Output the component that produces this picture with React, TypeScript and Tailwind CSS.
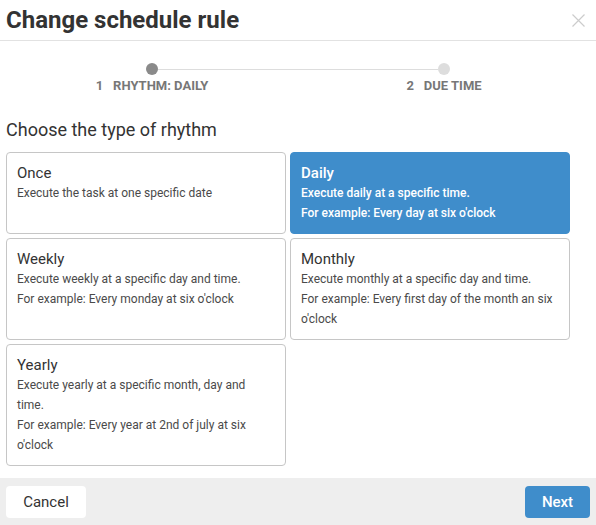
import React from "react";

const font = { fontFamily: "Roboto, 'Noto Sans', Arial, sans-serif" };

type Opt = { title: string; lines: string[]; selected?: boolean };

const options: Opt[] = [
  { title: "Once", lines: ["Execute the task at one specific date"] },
  {
    title: "Daily",
    lines: ["Execute daily at a specific time.", "For example: Every day at six o'clock"],
    selected: true,
  },
  {
    title: "Weekly",
    lines: ["Execute weekly at a specific day and time.", "For example: Every monday at six o'clock"],
  },
  {
    title: "Monthly",
    lines: ["Execute monthly at a specific day and time.", "For example: Every first day of the month an six o'clock"],
  },
  {
    title: "Yearly",
    lines: ["Execute yearly at a specific month, day and time.", "For example: Every year at 2nd of july at six o'clock"],
  },
];

function Card({ o }: { o: Opt }) {
  if (o.selected) {
    return (
      <div className="rounded-[4px] border border-[#3f8dcb] bg-[#3f8dcb] p-[10px] text-white">
        <div className="text-[15px] leading-[20px] font-medium">{o.title}</div>
        {o.lines.map((l, i) => (
          <div key={i} className="text-[12px] leading-[20px] font-medium">
            {l}
          </div>
        ))}
      </div>
    );
  }
  return (
    <div className="rounded-[4px] border border-[#c6c6c6] bg-white p-[10px]">
      <div className="text-[15px] leading-[20px] text-[#333333]">{o.title}</div>
      {o.lines.map((l, i) => (
        <div key={i} className="text-[12px] leading-[20px] text-[#4a4a4a]">
          {l}
        </div>
      ))}
    </div>
  );
}

export default function App() {
  return (
    <div className="flex h-[525px] w-[596px] flex-col bg-white" style={font}>
      <div className="flex h-[41px] items-center justify-between border-b border-[#e2e2e2] pl-[6px] pr-[11px]">
        <div className="text-[24px] font-bold leading-[28px] text-[#333333]">Change schedule rule</div>
        <svg width="13" height="13" viewBox="0 0 13 13">
          <path d="M0.5 0.5 L12.5 12.5 M12.5 0.5 L0.5 12.5" stroke="#cccccc" strokeWidth="1.2" />
        </svg>
      </div>

      <div className="mt-[22px] grid grid-cols-2 px-[6px]">
        <div className="flex flex-col items-center">
          <div className="flex w-full items-center">
            <div className="h-px flex-1" />
            <div className="h-[12px] w-[12px] rounded-full bg-[#8a8a8a]" />
            <div className="h-px flex-1 bg-[#dddddd]" />
          </div>
          <div className="mt-[3px] flex gap-[10px] text-[13px] font-bold leading-[16px] text-[#777777]">
            <span>1</span>
            <span>RHYTHM: DAILY</span>
          </div>
        </div>
        <div className="flex flex-col items-center">
          <div className="flex w-full items-center">
            <div className="h-px flex-1 bg-[#dddddd]" />
            <div className="h-[12px] w-[12px] rounded-full bg-[#dddddd]" />
            <div className="h-px flex-1" />
          </div>
          <div className="mt-[3px] flex gap-[10px] text-[13px] font-bold leading-[16px] text-[#777777]">
            <span>2</span>
            <span>DUE TIME</span>
          </div>
        </div>
      </div>

      <div className="mt-[25px] pl-[6px] text-[18px] leading-[22px] text-[#333333]">Choose the type of rhythm</div>

      <div className="mt-[11px] grid grid-cols-[280px_280px] gap-[4px] pl-[6px]">
        {options.map((o) => (
          <Card key={o.title} o={o} />
        ))}
      </div>

      <div className="mt-auto flex h-[47px] items-start justify-between bg-[#eeeeee] px-[6px] pt-[8px]">
        <button className="h-[32px] w-[80px] rounded-[4px] bg-white text-[15px] text-[#333333]">Cancel</button>
        <button className="h-[32px] w-[65px] rounded-[4px] bg-[#3f8dcb] text-[15px] font-medium text-white">Next</button>
      </div>
    </div>
  );
}
